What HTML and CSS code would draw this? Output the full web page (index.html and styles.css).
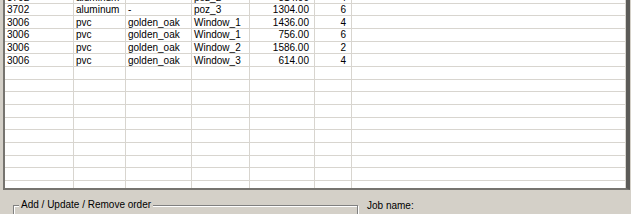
FILE: index.html
```html
<!DOCTYPE html>
<html lang="en">
<head>
    <meta charset="UTF-8">
    <link rel="stylesheet" href="styles.css">
</head>
<body>

<div class="grid">
    <div class="row"><span>3702</span><span>aluminum</span><span>-</span><span>poz_2</span><span class="num">814.00</span><span class="num">4</span><span></span></div>
    <div class="row"><span>3702</span><span>aluminum</span><span>-</span><span>poz_3</span><span class="num">1304.00</span><span class="num">6</span><span></span></div>
    <div class="row"><span>3006</span><span>pvc</span><span>golden_oak</span><span>Window_1</span><span class="num">1436.00</span><span class="num">4</span><span></span></div>
    <div class="row"><span>3006</span><span>pvc</span><span>golden_oak</span><span>Window_1</span><span class="num">756.00</span><span class="num">6</span><span></span></div>
    <div class="row"><span>3006</span><span>pvc</span><span>golden_oak</span><span>Window_2</span><span class="num">1586.00</span><span class="num">2</span><span></span></div>
    <div class="row"><span>3006</span><span>pvc</span><span>golden_oak</span><span>Window_3</span><span class="num">614.00</span><span class="num">4</span><span></span></div>
    <div class="row"><span></span><span></span><span></span><span></span><span></span><span></span><span></span></div>
    <div class="row"><span></span><span></span><span></span><span></span><span></span><span></span><span></span></div>
    <div class="row"><span></span><span></span><span></span><span></span><span></span><span></span><span></span></div>
    <div class="row"><span></span><span></span><span></span><span></span><span></span><span></span><span></span></div>
    <div class="row"><span></span><span></span><span></span><span></span><span></span><span></span><span></span></div>
    <div class="row"><span></span><span></span><span></span><span></span><span></span><span></span><span></span></div>
    <div class="row"><span></span><span></span><span></span><span></span><span></span><span></span><span></span></div>
    <div class="row"><span></span><span></span><span></span><span></span><span></span><span></span><span></span></div>
    <div class="row"><span></span><span></span><span></span><span></span><span></span><span></span><span></span></div>
    <div class="row"><span></span><span></span><span></span><span></span><span></span><span></span><span></span></div>
    <div class="row"><span></span><span></span><span></span><span></span><span></span><span></span><span></span></div>
</div>

<div class="panel">
    <fieldset class="group">
        <legend>Add / Update / Remove order</legend>
    </fieldset>
    <div class="job">Job name:</div>
</div>

</body>
</html>
```

FILE: styles.css
```css
html, body {
    margin: 0;
    height: 100%;
    overflow: hidden;
}

body {
    background: #d4d0c8;
    font-family: 'Liberation Sans', Arial, sans-serif;
    font-size: 10px;
    color: #000;
}

/* tabla de pedidos */
.grid {
    margin: -11px 1px 0 3px;
    height: 197px;
    background: #fff;
    border: 2px solid #76746f;
    border-right: 4px solid #5c5b58;
    overflow: hidden;
}

.row {
    display: grid;
    grid-template-columns: 69px 52px 66px 58px 65px 37px 1fr;
    height: 12.67px;
}

.row span {
    box-sizing: border-box;
    border-right: 1px solid #d8d5cf;
    border-bottom: 1px solid #d8d5cf;
    padding: 1.5px 2px 0 2px;
    line-height: 10px;
    white-space: nowrap;
}

.row span.num {
    text-align: right;
    padding-right: 5px;
}

/* parte de abajo */
.panel {
    display: flex;
    gap: 9px;
    padding: 8px 0 0 13px;
}

.group {
    box-sizing: border-box;
    width: 345px;
    height: 40px;
    margin: 0;
    padding: 0;
    border: 1px solid #808080;
    box-shadow: inset 1px 1px 0 #fff, 1px 1px 0 #fff;
}

.group legend {
    margin-left: 5px;
    padding: 0 2px;
    line-height: 14px;
    background: #d4d0c8;
}

.job {
    line-height: 14px;
    padding-top: 1px;
}
```
